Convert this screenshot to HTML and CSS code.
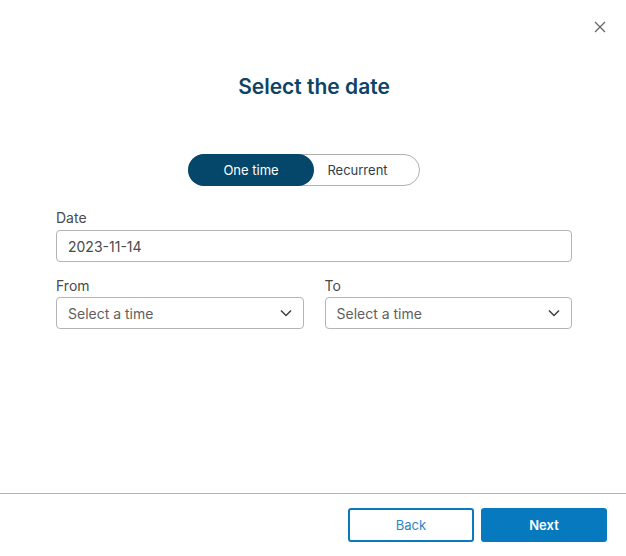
FILE: index.html
```html
<!DOCTYPE html>
<html lang="en">
<head>
    <meta charset="UTF-8">
    <meta name="viewport" content="width=device-width, initial-scale=1.0">
    <title>Select the date</title>
    <link rel="stylesheet" href="styles.css">
</head>
<body>
    <div class="modal">
        <button class="close-button" aria-label="Close">
            <svg width="12" height="12" viewBox="0 0 12 12">
                <path d="M1 1 L11 11 M11 1 L1 11" stroke="#6b6b6b" stroke-width="1.4" fill="none"/>
            </svg>
        </button>

        <div class="modal-body">
            <h2 class="title">Select the date</h2>

            <div class="toggle">
                <button class="toggle-option active">One time</button>
                <button class="toggle-option">Recurrent</button>
            </div>

            <div class="field date-field">
                <label for="date">Date</label>
                <input type="text" id="date" class="text-input" value="2023-11-14">
            </div>

            <div class="time-row">
                <div class="field">
                    <label>From</label>
                    <div class="select-box">
                        <span>Select a time</span>
                        <svg width="12" height="8" viewBox="0 0 12 8">
                            <path d="M1 1.5 L6 6.5 L11 1.5" stroke="#3f3f3f" stroke-width="1.5" fill="none"/>
                        </svg>
                    </div>
                </div>
                <div class="field">
                    <label>To</label>
                    <div class="select-box">
                        <span>Select a time</span>
                        <svg width="12" height="8" viewBox="0 0 12 8">
                            <path d="M1 1.5 L6 6.5 L11 1.5" stroke="#3f3f3f" stroke-width="1.5" fill="none"/>
                        </svg>
                    </div>
                </div>
            </div>
        </div>

        <div class="modal-footer">
            <button class="btn btn-outline">Back</button>
            <button class="btn btn-primary">Next</button>
        </div>
    </div>
</body>
</html>
```

FILE: styles.css
```css
body {
    margin: 0;
    font-family: Inter, "Noto Sans", sans-serif;
    background: #fff;
}

.modal {
    position: relative;
    display: flex;
    flex-direction: column;
    height: 556px;
    background: #fff;
}

.close-button {
    position: absolute;
    top: 21px;
    right: 20px;
    padding: 0;
    border: none;
    background: none;
    width: 12px;
    height: 12px;
    cursor: pointer;
}

.close-button svg {
    display: block;
}

.modal-body {
    flex: 1;
    padding: 75px 54px 0 56px;
}

.title {
    margin: 0;
    text-align: center;
    font-size: 21px;
    line-height: 24px;
    font-weight: 600;
    color: #0d4466;
}

.toggle {
    display: flex;
    width: 232px;
    height: 32px;
    margin: 55px 0 0 132px;
    box-sizing: border-box;
    border: 1px solid #b0b0b0;
    border-radius: 16px;
}

.toggle-option {
    border: none;
    background: none;
    font-family: inherit;
    font-size: 13px;
    color: #2f3e4a;
    padding: 0;
    cursor: pointer;
}

.toggle-option:first-child {
    width: 126px;
}

.toggle-option:last-child {
    flex: 1;
    padding-right: 18px;
}

.toggle-option.active {
    background: #04476a;
    color: #fff;
    border-radius: 16px;
    margin: -1px 0 -1px -1px;
}

.field label {
    display: block;
    font-size: 14px;
    line-height: 17px;
    color: #4a4a4a;
    margin-bottom: 4px;
}

.date-field {
    margin-top: 23px;
}

.text-input,
.select-box {
    box-sizing: border-box;
    width: 100%;
    height: 32px;
    border: 1px solid #b4b4b4;
    border-radius: 4px;
    padding: 0 11px;
    font-family: inherit;
    font-size: 14px;
    color: #4a4a4a;
}

.time-row {
    display: grid;
    grid-template-columns: 1fr 1fr;
    gap: 21px;
    margin-top: 15px;
}

.time-row label {
    margin-bottom: 3px;
}

.select-box {
    display: flex;
    align-items: center;
    justify-content: space-between;
    color: #5f5f5f;
    padding-right: 11px;
}

.modal-footer {
    display: flex;
    justify-content: flex-end;
    gap: 7px;
    border-top: 1px solid #b2b2b2;
    padding: 14px 19px 14px 0;
}

.btn {
    width: 126px;
    height: 34px;
    border-radius: 3px;
    font-family: inherit;
    font-size: 13px;
    cursor: pointer;
}

.btn-outline {
    background: #fff;
    border: 2px solid #0a7abd;
    color: #2a86c4;
}

.btn-primary {
    background: #0779be;
    border: none;
    color: #fff;
    font-weight: 600;
}
```
